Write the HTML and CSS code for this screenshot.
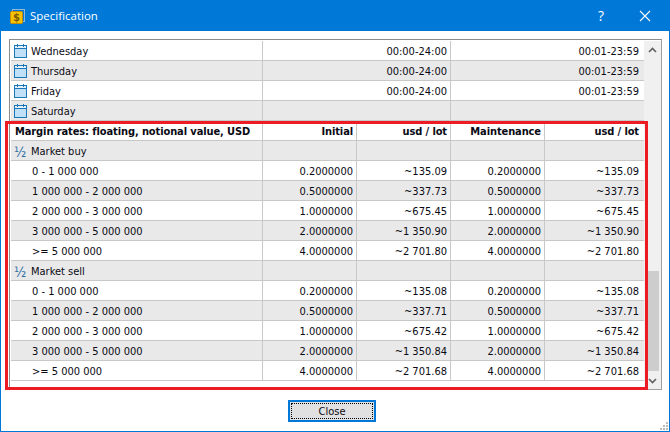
FILE: index.html
```html
<!DOCTYPE html>
<html lang="en">
<head>
<meta charset="utf-8">
<title>Specification</title>
<link rel="stylesheet" href="styles.css">
</head>
<body>
<svg class="defs" width="0" height="0" aria-hidden="true">
  <symbol id="cal" viewBox="0 0 14 14">
    <rect x="0.5" y="1.5" width="12" height="12" fill="#bfe0f6" stroke="#1c77b8"/>
    <rect x="1" y="2" width="11" height="2" fill="#e4f2fb"/>
    <rect x="1" y="4" width="11" height="1" fill="#1c77b8"/>
    <rect x="3" y="0" width="1" height="3" fill="#1c77b8"/>
    <rect x="9" y="0" width="1" height="3" fill="#1c77b8"/>
  </symbol>
</svg>
<div class="window">
  <header class="titlebar">
    <svg class="app-icon" width="15" height="15" viewBox="0 0 15 15">
      <rect x="2.5" y="0.5" width="12" height="12" fill="none" stroke="#8fb8d8"/>
      <rect x="0.5" y="2.5" width="12" height="12" rx="1" fill="#f7c204" stroke="#c48d00"/>
      <text x="6.5" y="12" class="app-dollar">$</text>
    </svg>
    <span class="title">Specification</span>
    <span class="help">?</span>
    <svg class="close-x" width="12" height="12" viewBox="0 0 12 12"><path d="M1 1L11 11M11 1L1 11" stroke="#fff" stroke-width="1.1" fill="none"/></svg>
  </header>
  <main class="body">
    <div class="panel">
      <div class="tables">
        <table class="grid">
          <colgroup><col class="c-name"><col class="c-wide"><col class="c-last"></colgroup>
          <tr><td class="name"><svg class="ico"><use href="#cal"/></svg>Wednesday</td><td>00:00-24:00</td><td>00:01-23:59</td></tr>
          <tr class="alt"><td class="name"><svg class="ico"><use href="#cal"/></svg>Thursday</td><td>00:00-24:00</td><td>00:01-23:59</td></tr>
          <tr><td class="name"><svg class="ico"><use href="#cal"/></svg>Friday</td><td>00:00-24:00</td><td>00:01-23:59</td></tr>
          <tr class="alt"><td class="name"><svg class="ico"><use href="#cal"/></svg>Saturday</td><td></td><td></td></tr>
        </table>
        <table class="grid">
          <colgroup><col class="c-name"><col class="c-num"><col class="c-num"><col class="c-num"><col class="c-end"></colgroup>
          <tr class="head"><td class="name head-name">Margin rates: floating, notional value, USD</td><td>Initial</td><td>usd / lot</td><td>Maintenance</td><td>usd / lot</td></tr>
          <tr class="alt"><td class="name"><span class="half">½</span>Market buy</td><td></td><td></td><td></td><td></td></tr>
          <tr><td class="name tier">0 - 1 000 000</td><td>0.2000000</td><td>~135.09</td><td>0.2000000</td><td>~135.09</td></tr>
          <tr class="alt"><td class="name tier">1 000 000 - 2 000 000</td><td>0.5000000</td><td>~337.73</td><td>0.5000000</td><td>~337.73</td></tr>
          <tr><td class="name tier">2 000 000 - 3 000 000</td><td>1.0000000</td><td>~675.45</td><td>1.0000000</td><td>~675.45</td></tr>
          <tr class="alt"><td class="name tier">3 000 000 - 5 000 000</td><td>2.0000000</td><td>~1 350.90</td><td>2.0000000</td><td>~1 350.90</td></tr>
          <tr><td class="name tier">&gt;= 5 000 000</td><td>4.0000000</td><td>~2 701.80</td><td>4.0000000</td><td>~2 701.80</td></tr>
          <tr class="alt"><td class="name"><span class="half">½</span>Market sell</td><td></td><td></td><td></td><td></td></tr>
          <tr><td class="name tier">0 - 1 000 000</td><td>0.2000000</td><td>~135.08</td><td>0.2000000</td><td>~135.08</td></tr>
          <tr class="alt"><td class="name tier">1 000 000 - 2 000 000</td><td>0.5000000</td><td>~337.71</td><td>0.5000000</td><td>~337.71</td></tr>
          <tr><td class="name tier">2 000 000 - 3 000 000</td><td>1.0000000</td><td>~675.42</td><td>1.0000000</td><td>~675.42</td></tr>
          <tr class="alt"><td class="name tier">3 000 000 - 5 000 000</td><td>2.0000000</td><td>~1 350.84</td><td>2.0000000</td><td>~1 350.84</td></tr>
          <tr><td class="name tier">&gt;= 5 000 000</td><td>4.0000000</td><td>~2 701.68</td><td>4.0000000</td><td>~2 701.68</td></tr>
        </table>
      </div>
      <div class="scrollbar">
        <div class="arrow"><svg width="9" height="6" viewBox="0 0 9 6"><path d="M1 5L4.5 1.5L8 5" stroke="#606060" stroke-width="1.6" fill="none"/></svg></div>
        <div class="track"><div class="thumb"></div></div>
        <div class="arrow"><svg width="9" height="6" viewBox="0 0 9 6"><path d="M1 1L4.5 4.5L8 1" stroke="#606060" stroke-width="1.6" fill="none"/></svg></div>
      </div>
      <div class="highlight"></div>
    </div>
    <footer class="actions"><button class="close-btn" type="button"><span class="close-label">Close</span></button></footer>
  </main>
  <svg class="grip" width="8" height="8" viewBox="0 0 8 8"><path d="M6 0h2v2H6zM3 3h2v2H3zM6 3h2v2H6zM0 6h2v2H0zM3 6h2v2H3zM6 6h2v2H6z" fill="#bdbdbd"/></svg>
</div>
</body>
</html>
```

FILE: styles.css
```css
* { box-sizing: border-box; }
html, body { margin: 0; padding: 0; }
body { width: 670px; height: 432px; overflow: hidden; background: #fff; font-family: "DejaVu Sans Condensed", "DejaVu Sans", sans-serif; font-size: 11px; color: #0a0a14; }
.defs { position: absolute; }
.window { position: relative; width: 670px; height: 432px; border: 1px solid #0078d7; display: flex; flex-direction: column; background: #fff; }
.titlebar { height: 30px; flex: none; background: #0078d7; color: #fff; display: flex; align-items: center; padding-left: 9px; }
.app-icon { flex: none; }
.app-dollar { font-family: "DejaVu Sans", sans-serif; font-size: 10px; font-weight: 700; text-anchor: middle; fill: #7a5a00; }
.title { font-family: "Open Sans", sans-serif; font-size: 11.5px; margin-left: 5px; padding-bottom: 2px; flex: 1; }
.help { font-family: "Open Sans", sans-serif; font-size: 14px; margin-right: 35px; padding-bottom: 2px; }
.close-x { margin-right: 18px; }
.body { flex: 1; display: flex; flex-direction: column; padding: 8px 0 0 8px; }
.panel { position: relative; width: 653px; height: 351px; flex: none; border: 1px solid #8c8c8c; border-right-color: #a0a0a0; border-bottom-color: #a0a0a0; padding: 1px 0 0 1px; display: flex; }
.tables { width: 633px; flex: none; }
.grid { width: 633px; table-layout: fixed; border-collapse: separate; border-spacing: 0; }
.c-name { width: 252px; }
.c-wide { width: 188px; }
.c-last { width: 193px; }
.c-num { width: 94px; }
.c-end { width: 99px; }
.grid td { height: 20px; padding: 3px 3px 0 0; border-bottom: 1px solid #c8c8c8; border-right: 1px solid #c8c8c8; text-align: right; line-height: 16px; white-space: nowrap; overflow: hidden; }
.grid td:last-child { border-right: 0; padding-right: 5px; }
.alt td { background: #e9e9e9; }
.grid td.name { text-align: left; padding-left: 3px; }
.grid td.tier { padding-left: 21px; }
.ico { width: 14px; height: 14px; vertical-align: -3px; margin-right: 3px; }
.half { display: inline-block; width: 17px; font-size: 14px; color: #2b6ea6; line-height: 16px; vertical-align: top; }
.head td { font-weight: 700; letter-spacing: -0.1px; }
.grid td.head-name { padding-left: 4px; }
.scrollbar { width: 17px; flex: none; background: #f0f0f0; display: flex; flex-direction: column; }
.arrow { height: 17px; flex: none; display: flex; align-items: center; justify-content: center; }
.track { flex: 1; padding-top: 213px; }
.thumb { height: 100px; margin: 0 2px 0 1px; background: #cdcdcd; }
.highlight { position: absolute; left: -5px; top: 81px; width: 643px; height: 269px; border: 3px solid #ed1c24; pointer-events: none; }
.actions { display: flex; justify-content: center; padding: 10px 14px 0 0; }
.close-btn { width: 88px; height: 22px; padding: 1px; background: #e1e1e1; border: 2px solid #0078d7; font: inherit; color: inherit; display: flex; }
.close-label { flex: 1; border: 1px dotted #000; line-height: 16px; text-align: center; }
.grip { position: absolute; right: 1px; bottom: 1px; }
```
